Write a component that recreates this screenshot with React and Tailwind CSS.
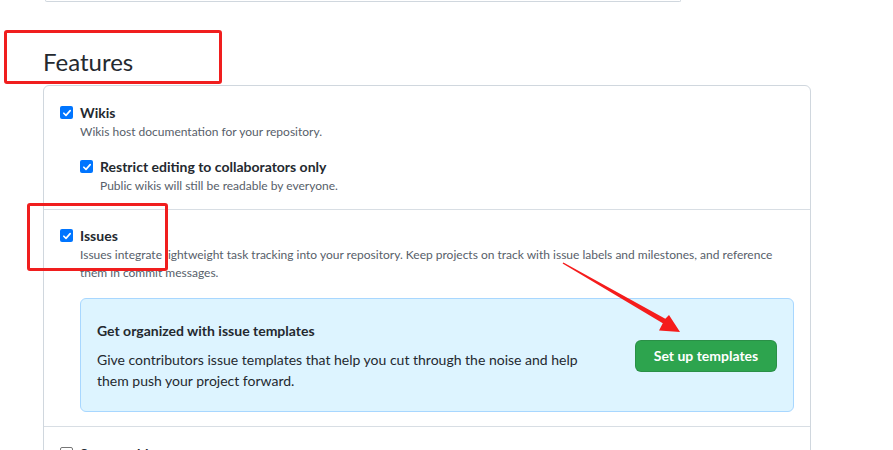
import React from "react";

const Check = ({ checked = true }) =>
  checked ? (
    <span className="mt-[4px] flex h-[13px] w-[13px] shrink-0 items-center justify-center rounded-[2px] bg-[#0075ff]">
      <svg viewBox="0 0 12 12" className="h-[10px] w-[10px]">
        <path d="M2.2 6.3 L4.8 8.8 L9.8 3.2" fill="none" stroke="#fff" strokeWidth="2" strokeLinecap="round" strokeLinejoin="round" />
      </svg>
    </span>
  ) : (
    <span className="mt-[4px] h-[13px] w-[13px] shrink-0 rounded-[2px] border border-[#767676] bg-white" />
  );

const Option = ({ title, desc, checked, children }) => (
  <div className="flex gap-[7px]">
    <Check checked={checked} />
    <div>
      <div className="text-[14px] font-bold leading-[21px] text-[#24292f]">{title}</div>
      {desc && <p className="text-[12px] leading-[18px] text-[#57606a]">{desc}</p>}
      {children}
    </div>
  </div>
);

export default function App() {
  return (
    <div className="relative h-[450px] w-[893px] overflow-hidden bg-white font-['Lato',sans-serif] text-[#24292f]">
      {/* previous settings box, only its bottom edge shows */}
      <div className="ml-[45px] h-[2px] w-[636px] rounded-b-md border-x border-b border-[#d0d7de]" />

      <h2 className="ml-[43px] mt-[45px] text-[24px] font-normal leading-[30px]">Features</h2>

      <div className="ml-[43px] mt-2 w-[768px] rounded-md border border-[#d0d7de]">
        {/* Wikis */}
        <div className="border-b border-[#d8dee4] px-4 pb-[14px] pt-4">
          <Option title="Wikis" desc="Wikis host documentation for your repository.">
            <div className="mt-[15px]">
              <Option title="Restrict editing to collaborators only" desc="Public wikis will still be readable by everyone." />
            </div>
          </Option>
        </div>

        {/* Issues */}
        <div className="border-b border-[#d8dee4] px-4 pb-[14px] pt-[15px]">
          <Option
            title="Issues"
            desc={
              <>
                Issues integrate lightweight task tracking into your repository. Keep projects on track with issue labels and milestones, and reference
                <br />
                them in commit messages.
              </>
            }
          >
            <div className="mt-4 flex w-[714px] items-center justify-between rounded-md border border-[#a8d7ff] bg-[#ddf4ff] pb-[20px] pl-4 pr-4 pt-[21px]">
              <div>
                <h3 className="mb-2 text-[14px] font-bold leading-[21px]">Get organized with issue templates</h3>
                <p className="w-[495px] text-[14px] leading-[21px] text-[#24292f]">
                  Give contributors issue templates that help you cut through the noise and help
                  <br />
                  them push your project forward.
                </p>
              </div>
              <button className="h-8 w-[142px] rounded-md border border-[#1b1f2426] bg-[#2da44e] text-[14px] font-bold text-white">
                Set up templates
              </button>
            </div>
          </Option>
        </div>

        {/* Sponsorships */}
        <div className="px-4 pt-4 pb-4">
          <Option title="Sponsorships" checked={false} />
        </div>
      </div>

      {/* annotations */}
      <div className="absolute left-[4px] top-[30px] h-[54px] w-[218px] rounded-[3px] border-[3px] border-[#f01e1e]" />
      <div className="absolute left-[27px] top-[203px] h-[68px] w-[141px] rounded-[3px] border-[3px] border-[#f01e1e]" />
      <svg className="absolute left-0 top-0" width="893" height="450">
        <polygon
          points="563.4,262.4 665.3,318.8 669,315 680,332 659,330.5 662.8,323.2 562.6,263.6"
          fill="#f51c1c"
        />
      </svg>
    </div>
  );
}
